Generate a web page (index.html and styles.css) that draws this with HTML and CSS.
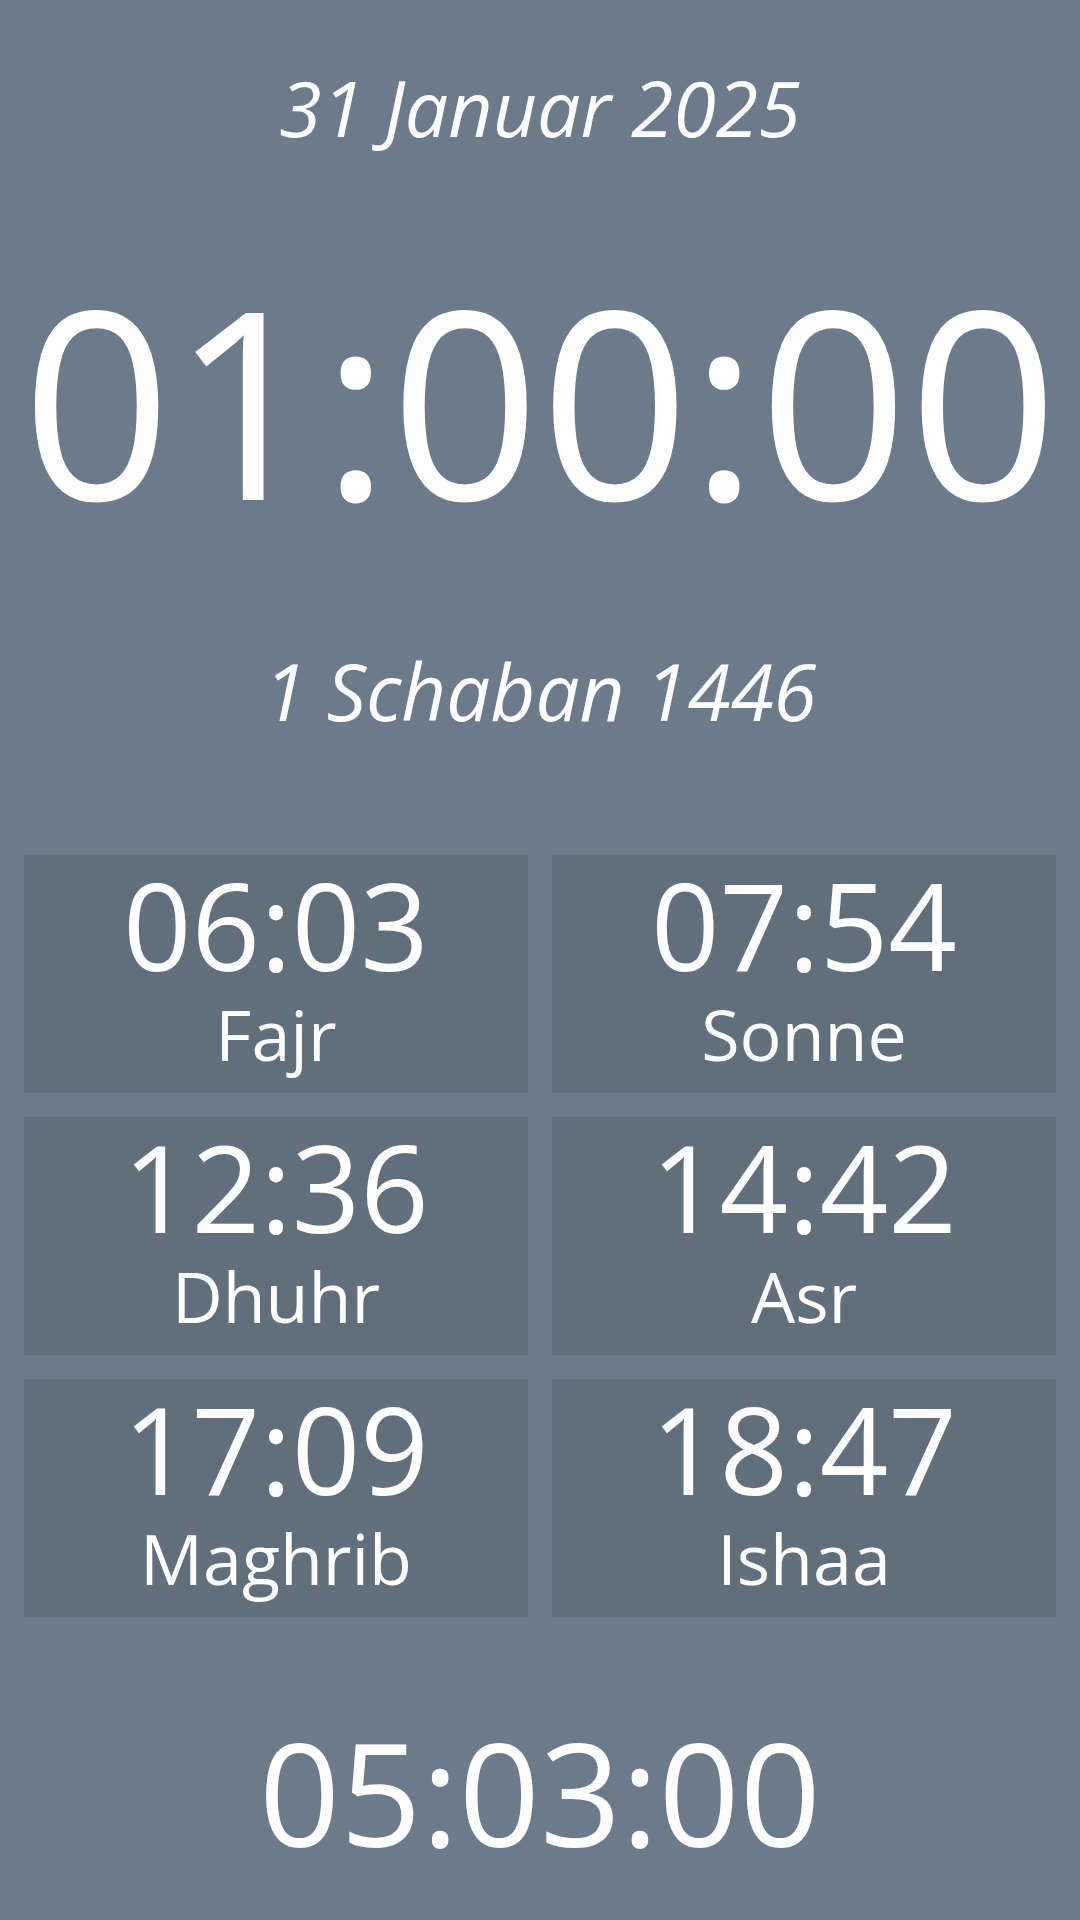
FILE: index.html
```html
<!DOCTYPE html>
<html lang="de">
<head>
<meta charset="utf-8">
<title>Gebetszeiten</title>
<link rel="stylesheet" href="styles.css">
</head>
<body>
<main class="screen">
  <div class="date">31 Januar 2025</div>
  <div class="clock">01:00:00</div>
  <div class="hijri">1 Schaban 1446</div>
  <section class="grid">
    <div class="cell"><div class="time">06:03</div><div class="name">Fajr</div></div>
    <div class="cell"><div class="time">07:54</div><div class="name">Sonne</div></div>
    <div class="cell"><div class="time">12:36</div><div class="name">Dhuhr</div></div>
    <div class="cell"><div class="time">14:42</div><div class="name">Asr</div></div>
    <div class="cell"><div class="time">17:09</div><div class="name">Maghrib</div></div>
    <div class="cell"><div class="time">18:47</div><div class="name">Ishaa</div></div>
  </section>
  <div class="countdown">05:03:00</div>
</main>
</body>
</html>
```
FILE: styles.css
```css
html, body {
  margin: 0;
  padding: 0;
}
body {
  background: #6c7b8b;
  color: #ffffff;
  font-family: "Open Sans", "Noto Sans", sans-serif;
  width: 1080px;
  height: 1920px;
  overflow: hidden;
}
.screen {
  display: flex;
  flex-direction: column;
  align-items: stretch;
  text-align: center;
}
.date {
  margin-top: 69px;
  font-size: 77px;
  line-height: 77px;
  font-style: italic;
}
.clock {
  margin-top: 122px;
  font-size: 262px;
  line-height: 262px;
}
.hijri {
  margin-top: 122px;
  font-size: 78px;
  line-height: 78px;
  font-style: italic;
}
.grid {
  margin-top: 125px;
  padding: 0 24px;
  display: grid;
  grid-template-columns: 1fr 1fr;
  grid-auto-rows: 238px;
  gap: 24px;
}
.cell {
  background: #616f7d;
  padding-top: 10px;
  display: flex;
  flex-direction: column;
  align-items: center;
}
.time {
  font-size: 120px;
  line-height: 120px;
}
.name {
  margin-top: 14px;
  font-size: 70px;
  line-height: 70px;
}
.countdown {
  margin-top: 104px;
  font-size: 142px;
  line-height: 142px;
}
```
